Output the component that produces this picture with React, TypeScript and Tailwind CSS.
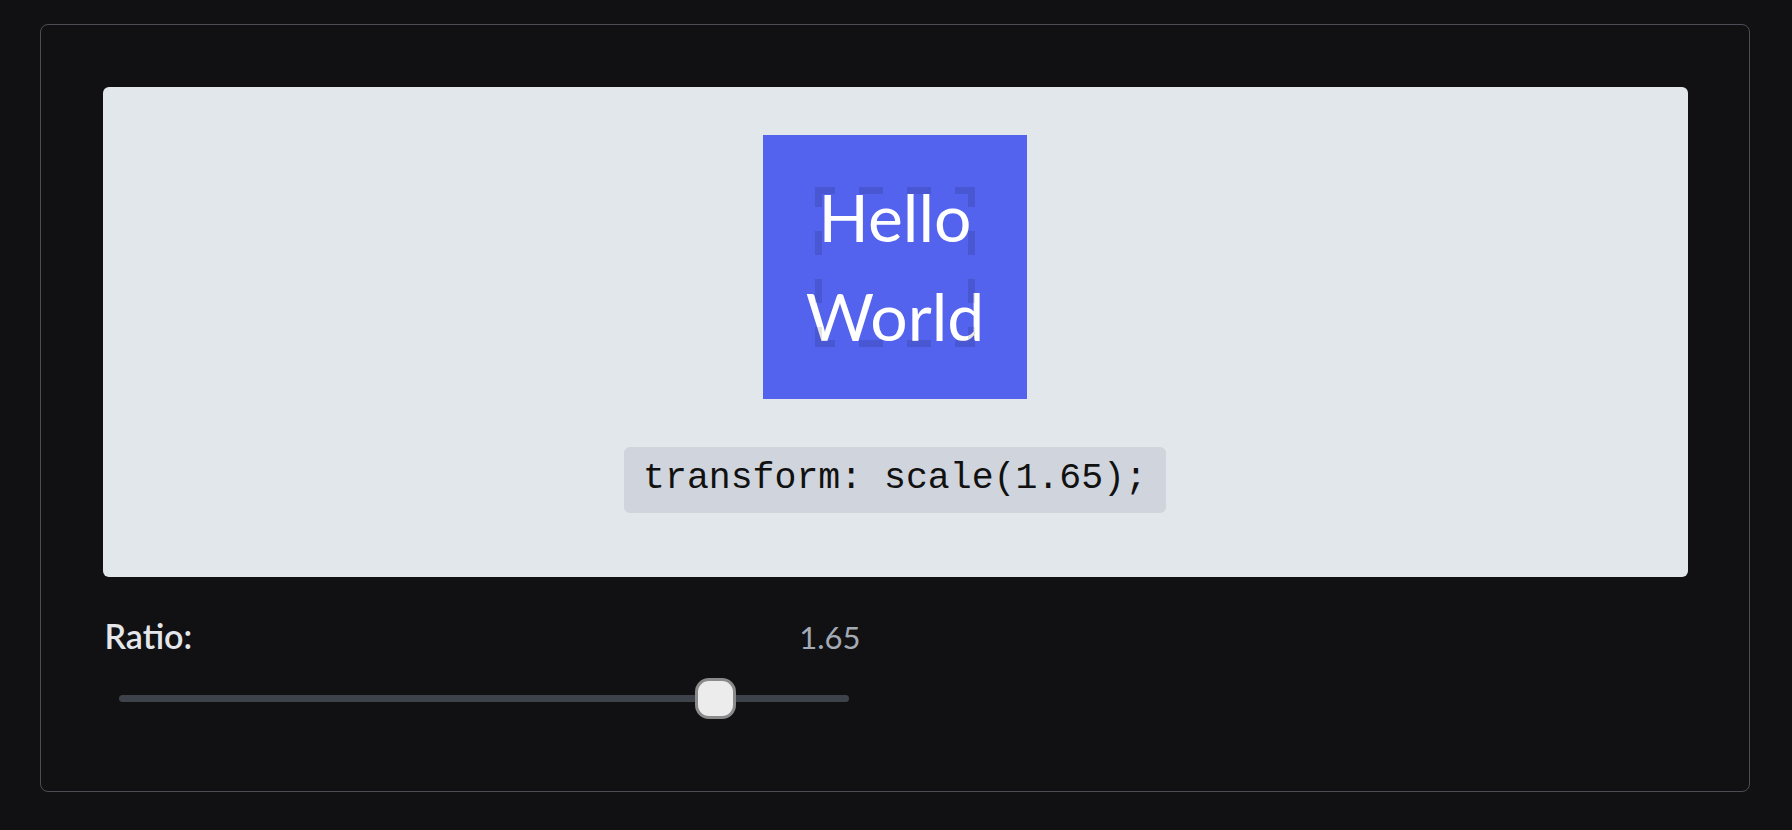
import React from 'react'

const RATIO = 1.65
const MIN = 0
const MAX = 2

// corner pieces 20px, middle dashes 24px, gaps 24px
const DASHES = '20 24 24 24 24 24 20 0'

function OriginalOutline() {
  return (
    <svg
      className="pointer-events-none absolute inset-0"
      width="160"
      height="160"
      viewBox="0 0 160 160"
    >
      <g opacity="0.11" stroke="#000" strokeWidth="7" strokeDasharray={DASHES}>
        <line x1="0" y1="3.5" x2="160" y2="3.5" />
        <line x1="0" y1="156.5" x2="160" y2="156.5" />
        <line x1="3.5" y1="0" x2="3.5" y2="160" />
        <line x1="156.5" y1="0" x2="156.5" y2="160" />
      </g>
    </svg>
  )
}

function ScaleDemo() {
  return (
    <div className="flex h-[490px] flex-col items-center rounded-[6px] bg-[#e2e7ec] pt-[100px]">
      <div className="relative h-[160px] w-[160px]">
        <div className="flex h-full w-full origin-center scale-[1.65] items-center justify-center bg-[#5363ee] text-center font-['Lato',sans-serif] text-[40px] leading-[60px] text-white">
          Hello
          <br />
          World
        </div>
        <OriginalOutline />
      </div>
      <code className="mt-[100px] flex h-[66px] items-center rounded-[6px] bg-[#d0d4dc] px-[19px] font-['Liberation_Mono',monospace] text-[36.5px] text-[#111]">
        transform: scale({RATIO});
      </code>
    </div>
  )
}

function RatioSlider() {
  const pct = (RATIO - MIN) / (MAX - MIN)

  return (
    <div className="flex w-[760px] flex-col pl-[2px]">
      <div className="flex items-baseline justify-between font-['Lato',sans-serif]">
        <span className="text-[34px] font-semibold text-[#e4e6ea]">Ratio:</span>
        <span className="pr-[2px] text-[31px] text-[#a3aab5]">{RATIO}</span>
      </div>
      <div className="relative mt-[17px] flex h-[41px] items-center px-[14px]">
        <div className="h-[7px] w-full rounded-[4px] bg-[#3e434b]" />
        <div
          className="absolute top-0 h-[41px] w-[41px] rounded-[14px] border-[3px] border-[#8a8a8a] bg-[#ececec]"
          style={{ left: `calc(14px + ${pct * 728}px - 24px)` }}
        />
      </div>
    </div>
  )
}

export default function App() {
  return (
    <div className="min-h-[830px] bg-[#111113] px-[40px] pt-[24px]">
      <div className="h-[768px] w-[1710px] rounded-[8px] border-[1.5px] border-[#4a4d53] p-[61.5px]">
        <ScaleDemo />
        <div className="mt-[33px]">
          <RatioSlider />
        </div>
      </div>
    </div>
  )
}
